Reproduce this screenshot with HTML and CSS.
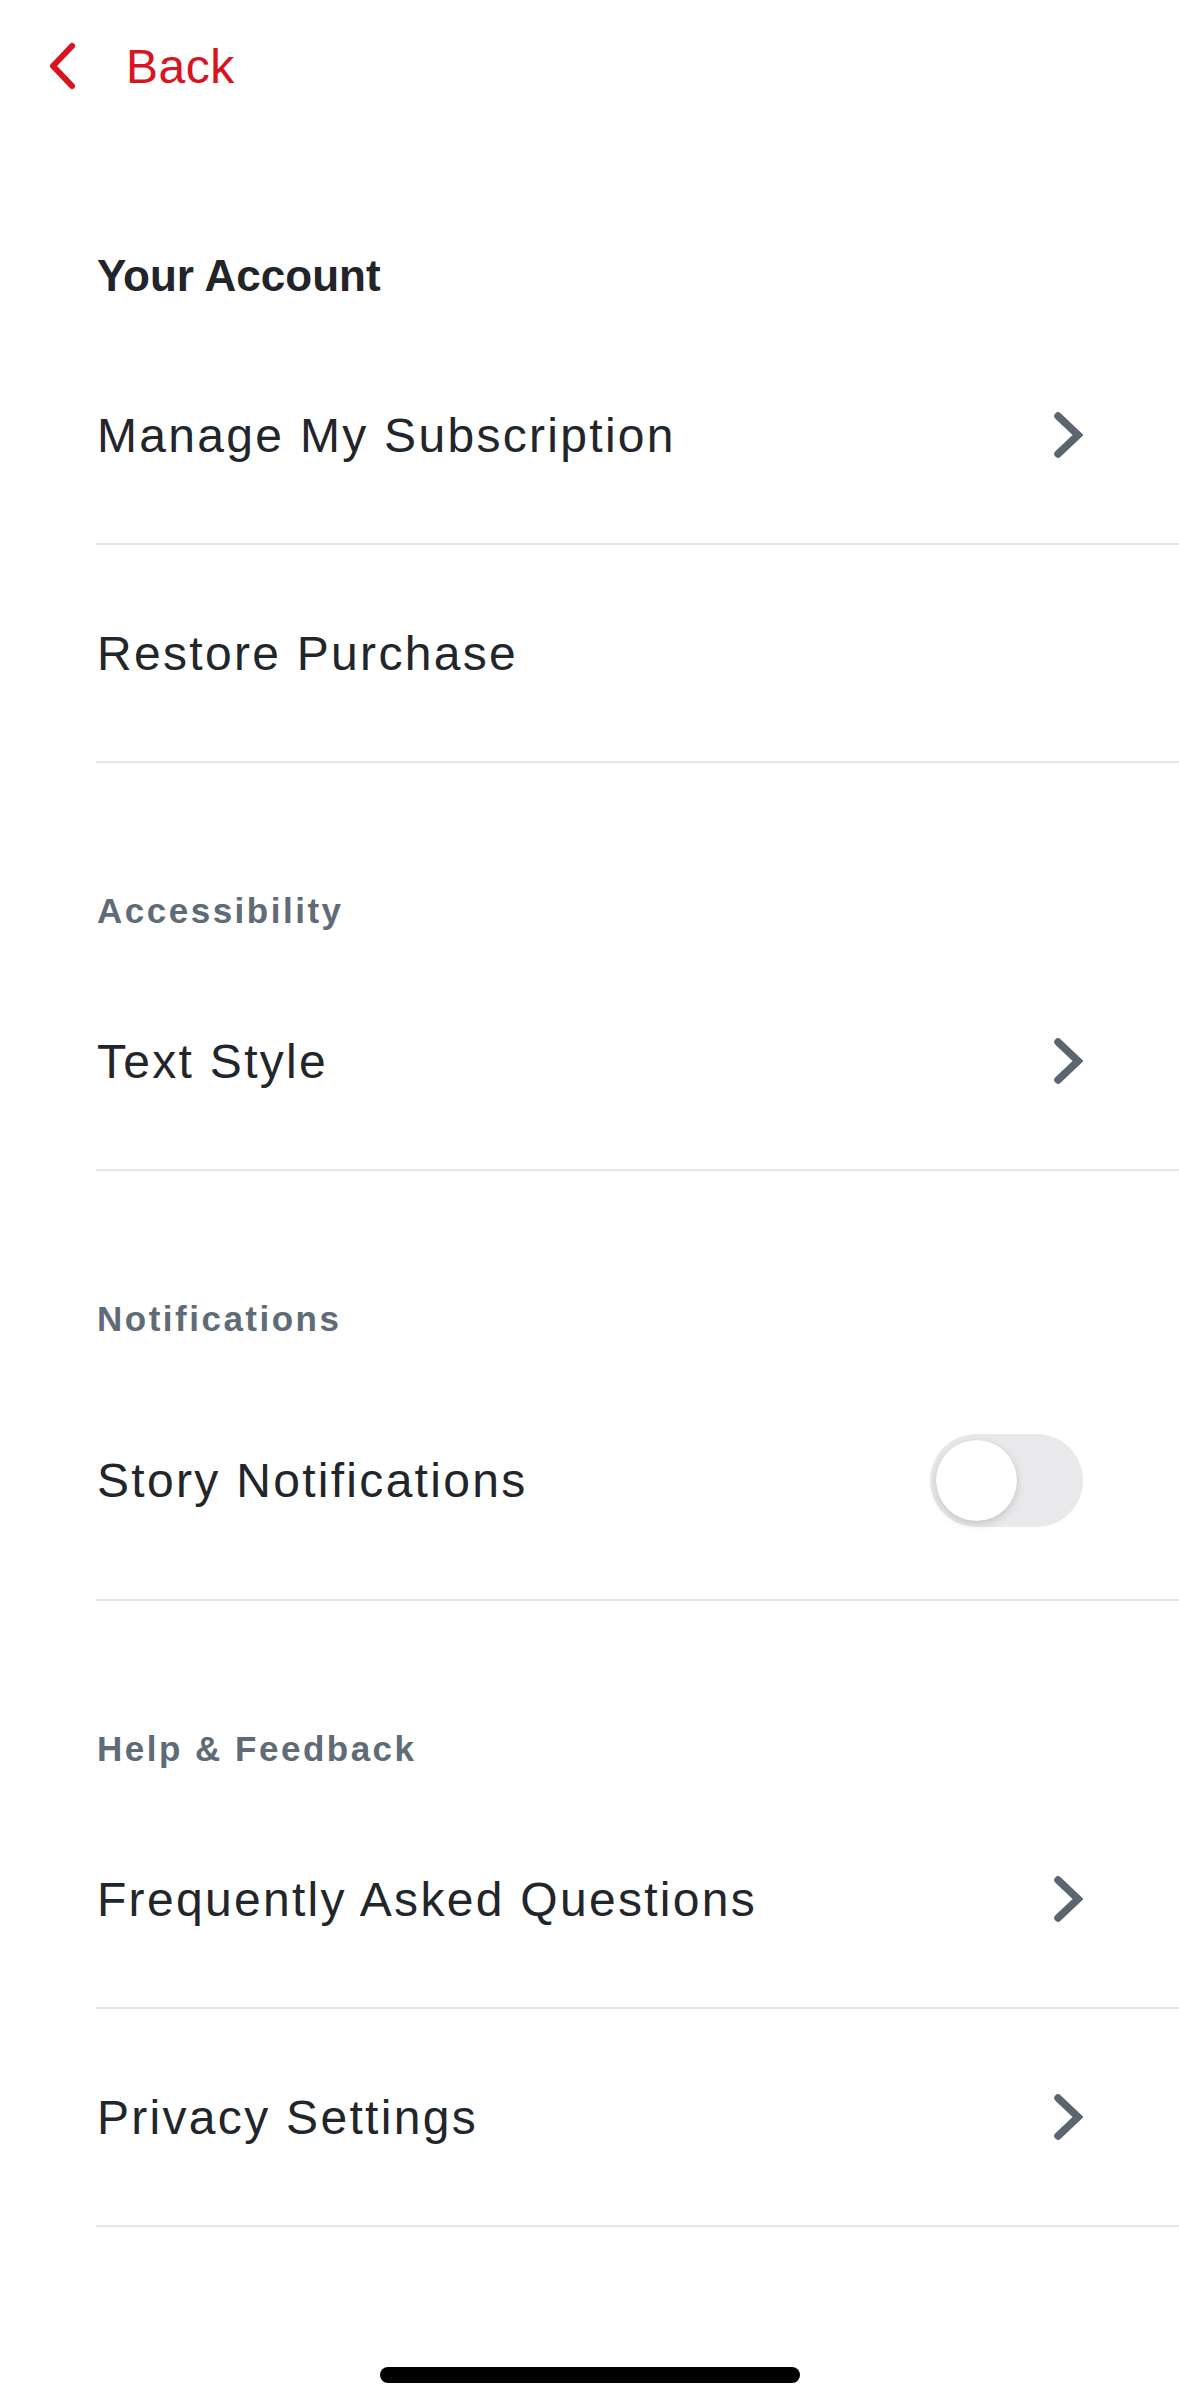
FILE: index.html
```html
<!DOCTYPE html>
<html lang="en">
<head>
    <meta charset="UTF-8">
    <meta name="viewport" content="width=device-width, initial-scale=1.0">
    <title>Settings</title>
    <link rel="stylesheet" href="styles.css">
</head>
<body>
    <nav class="top-nav">
        <a class="back-link" href="#">
            <svg class="back-icon" viewBox="0 0 28 48" aria-hidden="true">
                <path d="M24 4 L5 24 L24 44" />
            </svg>
            <span>Back</span>
        </a>
    </nav>

    <section class="settings-section settings-section--first">
        <h2 class="section-title section-title--main">Your Account</h2>
        <a class="settings-row" href="#">
            <span class="row-label">Manage My Subscription</span>
            <svg class="row-chevron" viewBox="0 0 30 48" aria-hidden="true">
                <path d="M5 5 L25 24 L5 43" />
            </svg>
        </a>
        <a class="settings-row" href="#">
            <span class="row-label">Restore Purchase</span>
        </a>
    </section>

    <section class="settings-section">
        <h2 class="section-title">Accessibility</h2>
        <a class="settings-row" href="#">
            <span class="row-label">Text Style</span>
            <svg class="row-chevron" viewBox="0 0 30 48" aria-hidden="true">
                <path d="M5 5 L25 24 L5 43" />
            </svg>
        </a>
    </section>

    <section class="settings-section">
        <h2 class="section-title">Notifications</h2>
        <div class="settings-row settings-row--toggle">
            <span class="row-label">Story Notifications</span>
            <button class="toggle" role="switch" aria-checked="false" aria-label="Story Notifications">
                <span class="toggle-knob"></span>
            </button>
        </div>
    </section>

    <section class="settings-section">
        <h2 class="section-title">Help &amp; Feedback</h2>
        <a class="settings-row" href="#">
            <span class="row-label">Frequently Asked Questions</span>
            <svg class="row-chevron" viewBox="0 0 30 48" aria-hidden="true">
                <path d="M5 5 L25 24 L5 43" />
            </svg>
        </a>
        <a class="settings-row" href="#">
            <span class="row-label">Privacy Settings</span>
            <svg class="row-chevron" viewBox="0 0 30 48" aria-hidden="true">
                <path d="M5 5 L25 24 L5 43" />
            </svg>
        </a>
    </section>

    <div class="home-indicator"></div>
</body>
</html>
```

FILE: styles.css
```css
body {
  margin: 0;
  background: #fff;
  font-family: "Liberation Sans", Arial, sans-serif;
  color: #22262a;
}

.top-nav {
  height: 132px;
  display: flex;
  align-items: center;
  padding-left: 48px;
}

.back-link {
  display: flex;
  align-items: center;
  gap: 50px;
  color: #d8141f;
  text-decoration: none;
  font-size: 48px;
  letter-spacing: 0.5px;
}

.back-icon {
  width: 28px;
  height: 48px;
  fill: none;
  stroke: #d8141f;
  stroke-width: 6;
  stroke-linecap: round;
  stroke-linejoin: round;
}

.settings-section {
  margin-top: 106px;
}

.settings-section--first {
  margin-top: 93px;
}

.section-title {
  margin: 0;
  padding-left: 97px;
  height: 84px;
  line-height: 84px;
  font-size: 35px;
  font-weight: 700;
  letter-spacing: 2.5px;
  color: #5f6b76;
}

.section-title--main {
  height: 102px;
  line-height: 102px;
  font-size: 44px;
  letter-spacing: 0;
  color: #212529;
}

.settings-row {
  display: flex;
  align-items: center;
  justify-content: space-between;
  height: 218px;
  box-sizing: border-box;
  margin-left: 96px;
  padding-right: 96px;
  border-bottom: 2px solid #e5e5e9;
  color: #22262a;
  text-decoration: none;
}

.settings-row--toggle {
  height: 240px;
}

.row-label {
  font-size: 48px;
  letter-spacing: 2.3px;
  padding-left: 1px;
}

.row-chevron {
  width: 30px;
  height: 48px;
  fill: none;
  stroke: #5b6570;
  stroke-width: 7.5;
  stroke-linecap: round;
  stroke-linejoin: miter;
}

.toggle {
  position: relative;
  width: 153px;
  height: 93px;
  padding: 0;
  border: none;
  border-radius: 47px;
  background: #e9e9eb;
  cursor: pointer;
}

.toggle-knob {
  position: absolute;
  top: 6px;
  left: 6px;
  width: 81px;
  height: 81px;
  border-radius: 50%;
  background: #fff;
  box-shadow: 0 3px 8px rgba(0, 0, 0, 0.15), 0 0 1px rgba(0, 0, 0, 0.12);
}

.home-indicator {
  width: 420px;
  height: 16px;
  margin: 140px auto 0;
  border-radius: 8px;
  background: #000;
}
```
